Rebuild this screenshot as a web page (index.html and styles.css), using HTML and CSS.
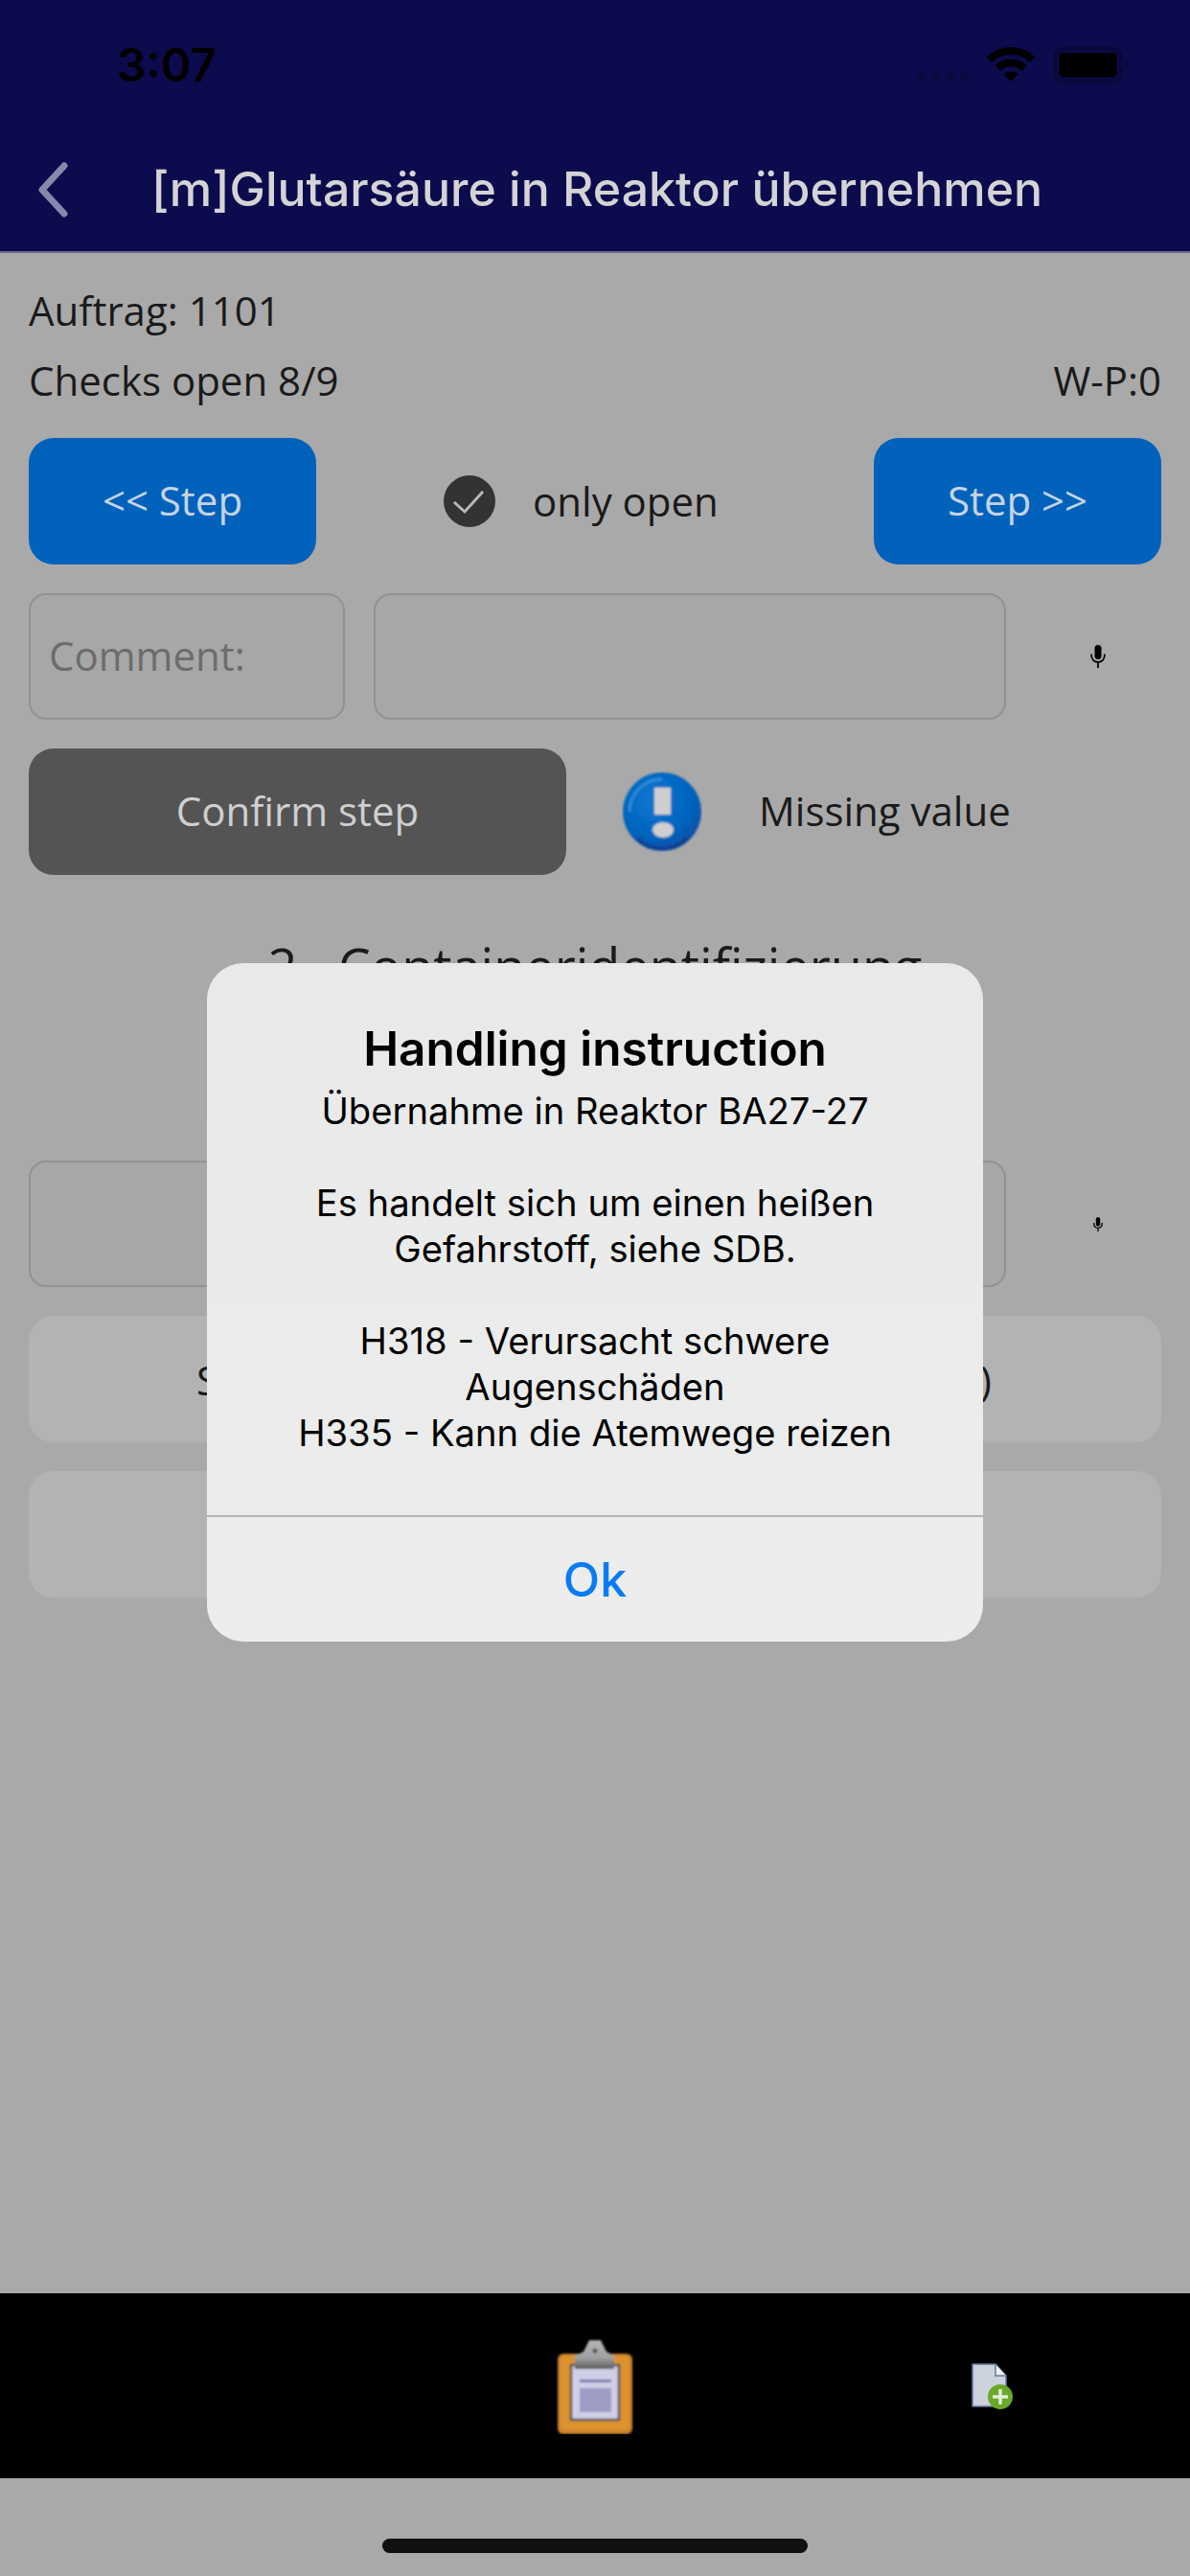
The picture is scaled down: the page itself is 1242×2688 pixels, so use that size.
FILE: index.html
```html
<!DOCTYPE html>
<html>
<head>
	<meta charset="UTF-8">
	<title>Handling instruction</title>
	<link rel="stylesheet" href="styles.css">
</head>
<body>
	<header class="app-header">
		<div class="status-bar">
			<span class="status-time">3:07</span>
			<svg class="status-icons" width="230" height="45" viewBox="0 0 230 45">
				<circle cx="12" cy="35" r="5" fill="#0a0a3e"/>
				<circle cx="27" cy="35" r="5" fill="#0a0a3e"/>
				<circle cx="42" cy="35" r="5" fill="#0a0a3e"/>
				<circle cx="57" cy="35" r="5" fill="#0a0a3e"/>
				<path d="M82.4 17.4A32 32 0 0 1 127.6 17.4" fill="none" stroke="#000" stroke-width="8"/>
				<path d="M91.2 26.2A19.5 19.5 0 0 1 118.8 26.2" fill="none" stroke="#000" stroke-width="8"/>
				<path d="M105 40L97.5 32.5A10.6 10.6 0 0 1 112.5 32.5Z" fill="#000"/>
				<rect x="151" y="5.5" width="69" height="35" rx="10" fill="none" stroke="#08083a" stroke-width="4"/>
				<rect x="155" y="10" width="61" height="26" rx="5" fill="#000"/>
				<path d="M224 18C227 19 228 21 228 23S227 27 224 28Z" fill="#08083a"/>
			</svg>
		</div>
		<div class="nav-bar">
			<svg class="back-icon" width="34" height="58" viewBox="0 0 34 58">
				<path d="M29 4L6 29L29 54" fill="none" stroke="#8888ac" stroke-width="7" stroke-linecap="round" stroke-linejoin="round"/>
			</svg>
			<h1 class="nav-title">[m]Glutarsäure in Reaktor übernehmen</h1>
		</div>
	</header>

	<main class="content">
		<div class="info-line">Auftrag: 1101</div>
		<div class="info-line info-split">
			<span>Checks open 8/9</span>
			<span>W-P:0</span>
		</div>

		<div class="step-row">
			<button class="btn btn-blue">&lt;&lt; Step</button>
			<div class="only-open">
				<svg width="54" height="54" viewBox="0 0 54 54">
					<circle cx="27" cy="27" r="27" fill="#333"/>
					<path d="M11 28L22 38L41 17" fill="none" stroke="#b8b8b8" stroke-width="3"/>
				</svg>
				<span>only open</span>
			</div>
			<button class="btn btn-blue">Step &gt;&gt;</button>
		</div>

		<div class="field-row">
			<div class="field field-label">Comment:</div>
			<div class="field field-value"></div>
			<div class="mic-cell">
				<svg width="16" height="24" viewBox="0 0 16 24">
					<rect x="4.5" y="0" width="7" height="15" rx="3.5" fill="#000"/>
					<path d="M1 9.5C1 15 4 18 8 18S15 15 15 9.5M8 18V24" fill="none" stroke="#000" stroke-width="1.8"/>
				</svg>
			</div>
		</div>

		<div class="confirm-row">
			<button class="btn btn-dark">Confirm step</button>
			<svg class="warn-icon" width="84" height="84" viewBox="0 0 84 84">
				<defs>
					<radialGradient id="warnFill" cx="0.4" cy="0.35" r="0.7">
						<stop offset="0" stop-color="#0a78d2"/>
						<stop offset="0.7" stop-color="#0463bb"/>
						<stop offset="1" stop-color="#0b4aa0"/>
					</radialGradient>
					<filter id="warnSoft"><feGaussianBlur stdDeviation="0.8"/></filter>
				</defs>
				<g filter="url(#warnSoft)">
					<circle cx="42" cy="42" r="41" fill="url(#warnFill)"/>
					<path d="M8 42A34 34 0 0 1 42 8" fill="none" stroke="#2f8bd8" stroke-width="3"/>
					<path d="M16 70A38 38 0 0 0 68 70" fill="none" stroke="#0a3f95" stroke-width="4"/>
					<rect x="34" y="17" width="17" height="28" fill="#cfcfcf"/>
					<ellipse cx="43" cy="61" rx="11" ry="8" fill="#cfcfcf"/>
				</g>
			</svg>
			<span class="warn-text">Missing value</span>
		</div>

		<h2 class="section-title">2.&nbsp;&nbsp;Containeridentifizierung</h2>

		<div class="field-row">
			<div class="field field-wide"></div>
			<div class="mic-cell">
				<svg width="10" height="15" viewBox="0 0 16 24">
					<rect x="4.5" y="0" width="7" height="15" rx="3.5" fill="#000"/>
					<path d="M1 9.5C1 15 4 18 8 18S15 15 15 9.5M8 18V24" fill="none" stroke="#000" stroke-width="2"/>
				</svg>
			</div>
		</div>
		<button class="btn btn-light btn-split"><span>S</span><span>)</span></button>
		<button class="btn btn-light"></button>
	</main>

	<footer class="tab-bar">
		<div class="tab-cell"></div>
		<div class="tab-cell">
			<svg width="80" height="100" viewBox="0 0 80 100">
				<defs>
					<linearGradient id="clipMetal" x1="0" y1="0" x2="0" y2="1">
						<stop offset="0" stop-color="#b5b5b5"/>
						<stop offset="0.6" stop-color="#a2a2a2"/>
						<stop offset="1" stop-color="#5c5c5c"/>
					</linearGradient>
					<filter id="soft"><feGaussianBlur stdDeviation="1"/></filter>
				</defs>
				<g filter="url(#soft)">
					<rect x="1" y="16" width="78" height="84" rx="6" fill="#c8822b"/>
					<rect x="4" y="18" width="72" height="78" rx="4" fill="#dc922f"/>
					<rect x="15" y="28" width="50" height="57" fill="#cfcfe6" stroke="#555" stroke-width="2.5"/>
					<rect x="24" y="43" width="33" height="3" fill="#7c7cb0"/>
					<rect x="24" y="52" width="33" height="25" fill="#9c9cc4"/>
					<path d="M19 32V18L28 14L34 2H46L52 14L60 18V32Z" fill="url(#clipMetal)"/>
					<circle cx="40" cy="13" r="2.5" fill="#555"/>
				</g>
			</svg>
		</div>
		<div class="tab-cell">
			<svg width="43" height="48" viewBox="0 0 43 48">
				<path d="M1 1H25L36 13V45H1Z" fill="#ccd2de" stroke="#6878a0" stroke-width="1.5"/>
				<path d="M25 1V13H36" fill="#eef0f4" stroke="#6878a0" stroke-width="1.5"/>
				<circle cx="30" cy="35" r="13" fill="#6aa82a"/>
				<path d="M30 27V43M22 35H38" stroke="#e4eed8" stroke-width="3.5"/>
			</svg>
		</div>
	</footer>
	<div class="home-area"><div class="home-indicator"></div></div>

	<div class="alert">
		<div class="alert-body">
			<h3 class="alert-title">Handling instruction</h3>
			<p class="alert-text">Übernahme in Reaktor BA27-27<br><br>Es handelt sich um einen heißen<br>Gefahrstoff, siehe SDB.<br><br>H318 - Verursacht schwere<br>Augenschäden<br>H335 - Kann die Atemwege reizen</p>
		</div>
		<div class="alert-action">Ok</div>
	</div>
</body>
</html>
```

FILE: styles.css
```css
* {
	box-sizing: border-box;
}

body {
	margin: 0;
	width: 1242px;
	height: 2688px;
	display: flex;
	flex-direction: column;
	position: relative;
	overflow: hidden;
	background-color: #a9a9a9;
	color: #1a1a1a;
	font-family: "Open Sans", sans-serif;
	font-size: 42px;
}

/* header */
.app-header {
	height: 264px;
	background-color: #0c0b4d;
	border-bottom: 2px solid #6b6b86;
}

.status-bar {
	height: 132px;
	padding: 45px 62px 0 122px;
	display: flex;
	justify-content: space-between;
	align-items: flex-start;
}

.status-time {
	font-family: Inter, sans-serif;
	font-weight: 600;
	font-size: 48px;
	line-height: 46px;
	color: #000;
}

.nav-bar {
	height: 130px;
	display: flex;
	align-items: center;
	padding: 0 0 0 38px;
}

.back-icon {
	margin-top: 1px;
}

.nav-title {
	margin: 0 0 0 86px;
	font-family: Inter, sans-serif;
	font-weight: 500;
	font-size: 50px;
	color: #d4d4d6;
	white-space: nowrap;
}

/* page */
.content {
	flex: 1;
	padding: 22px 30px 0;
}

.info-line {
	height: 75px;
	line-height: 75px;
}

.info-split {
	display: flex;
	justify-content: space-between;
	line-height: 72px;
}

.btn {
	display: block;
	height: 132px;
	border: none;
	border-radius: 26px;
	font-family: "Open Sans", sans-serif;
	font-size: 42px;
	padding: 0 0 3px;
}

.btn-blue {
	width: 300px;
	background-color: #0062bb;
	color: #c6d3e3;
}

.btn-dark {
	width: 561px;
	background-color: #545454;
	color: #cfcfcf;
}

.btn-light {
	width: 100%;
	margin-top: 30px;
	background-color: #b3b3b3;
	color: #1a1a1a;
}

.btn-split {
	display: flex;
	align-items: center;
	justify-content: space-between;
	padding: 0 177px 0 175px;
}

.step-row {
	display: grid;
	grid-template-columns: 300px 1fr 300px;
	margin-top: 21px;
}

.only-open {
	display: flex;
	align-items: center;
	gap: 39px;
	padding-left: 133px;
	line-height: 56px;
}

.field-row {
	display: flex;
	gap: 30px;
	margin-top: 30px;
	margin-right: -30px;
}

.field {
	height: 132px;
	border: 2px solid #929292;
	border-radius: 18px;
	background-color: #a7a7a7;
}

.field-label {
	width: 330px;
	padding-left: 19px;
	line-height: 126px;
	color: #6c6c6c;
}

.field-value {
	width: 660px;
}

.field-wide {
	width: 1020px;
}

.mic-cell {
	flex: 1;
	margin-left: -30px;
	display: flex;
	align-items: center;
	justify-content: center;
}

.confirm-row {
	display: flex;
	align-items: center;
	margin-top: 30px;
}

.warn-icon {
	margin: 0 59px 0 58px;
}

.warn-text {
	padding-bottom: 3px;
}

.section-title {
	height: 237px;
	margin: 31px 0 0;
	padding-top: 27px;
	text-align: center;
	font-weight: 400;
	font-size: 54px;
	line-height: 74px;
	color: #1a1a1a;
}

/* bottom */
.tab-bar {
	height: 193px;
	background-color: #000;
	display: grid;
	grid-template-columns: repeat(3, 1fr);
	align-items: center;
	justify-items: center;
}

.tab-cell {
	display: flex;
}

.home-area {
	height: 102px;
	padding-top: 63px;
	display: flex;
	justify-content: center;
}

.home-indicator {
	width: 444px;
	height: 15px;
	border-radius: 8px;
	background-color: #111;
}

/* dialog */
.alert {
	position: absolute;
	left: 216px;
	top: 1005px;
	width: 810px;
	height: 708px;
	border-radius: 38px;
	background: linear-gradient(#e8e9e9, #ecedec);
	font-family: Inter, sans-serif;
	color: #000;
	text-align: center;
}

.alert-body {
	height: 576px;
	padding-top: 57px;
}

.alert-title {
	margin: 0;
	font-size: 49.5px;
	font-weight: 600;
	line-height: 64px;
}

.alert-text {
	margin: 9px 0 0;
	font-size: 38.2px;
	line-height: 48px;
}

.alert-action {
	height: 132px;
	border-top: 2px solid #b4b4b4;
	line-height: 130px;
	font-size: 50px;
	font-weight: 500;
	color: #0a7bf5;
}
```
